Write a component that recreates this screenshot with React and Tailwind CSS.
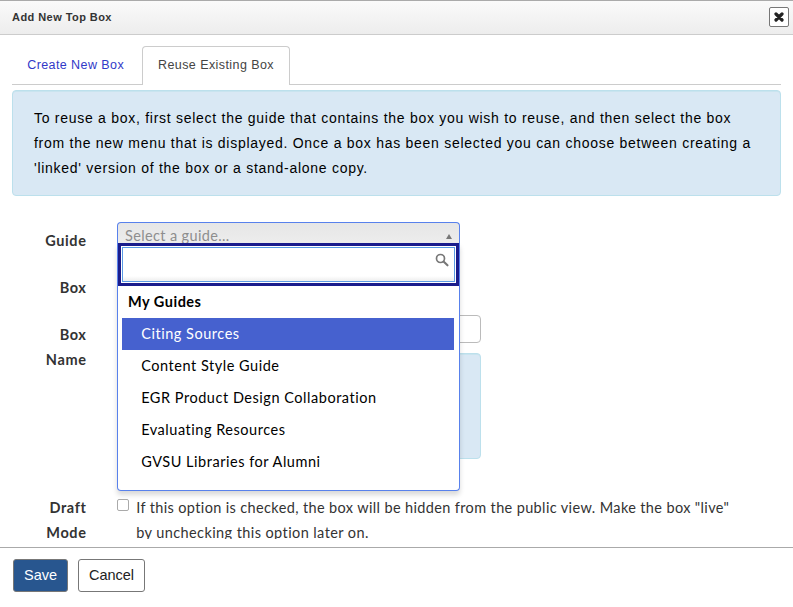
const guides = [
  "Citing Sources",
  "Content Style Guide",
  "EGR Product Design Collaboration",
  "Evaluating Resources",
  "GVSU Libraries for Alumni",
];

function Header() {
  return (
    <header className="flex h-[35px] shrink-0 items-start justify-between border-t border-b border-t-[#aaa] border-b-[#ccc] bg-gradient-to-b from-[#fafafa] to-[#ededed] pr-1 pl-3">
      <h1 className="pt-2 text-[11px] leading-4 font-bold tracking-[0.44px] text-[#333]">Add New Top Box</h1>
      <button className="mt-[6px] flex h-5 w-5 items-center justify-center rounded-[2px] border border-[#777] bg-white" aria-label="Close">
        <svg width="10" height="10" viewBox="0 0 10 10" stroke="#222" strokeWidth="3.2" strokeLinecap="round">
          <path d="M2 2l6 6M8 2l-6 6" />
        </svg>
      </button>
    </header>
  );
}

function Tabs() {
  return (
    <nav className="mx-3 mt-[11px] flex h-[39px] shrink-0 border-b border-[#ccc] text-[12.5px] leading-[38px] whitespace-nowrap">
      <a className="w-[130px] pl-[15.2px] tracking-[0.42px] text-[#3139c8]">Create New Box</a>
      <a className="-mb-px h-[39px] w-[148px] rounded-t-[4px] border border-b-0 border-[#ccc] bg-white pl-[15px] leading-[36px] tracking-[0.42px] text-[#444]">
        Reuse Existing Box
      </a>
    </nav>
  );
}

function GuideMenu() {
  return (
    <div className="absolute top-[21px] left-0 h-[248px] w-[343px] rounded-b-[4px] border border-t-0 border-[#5881ec] bg-white shadow-[0_4px_5px_rgba(0,0,0,0.15)]">
      <div className="h-[43px] border-[3px] border-[#1a1c8c] p-px">
        <div className="flex h-[35px] justify-end border border-[#5b9be4] bg-gradient-to-b from-white from-85% to-[#eee] pt-[5px] pr-[5px]">
          <svg width="14" height="14" viewBox="0 0 14 14" fill="none" stroke="#777" strokeLinecap="round">
            <circle cx="5.5" cy="5.5" r="4" strokeWidth="1.7" />
            <path d="M8.8 8.8l3.7 3.5" strokeWidth="2.1" />
          </svg>
        </div>
      </div>
      <div className="pr-[5px] pl-1 text-[14.5px] leading-8 tracking-[0.53px] text-black">
        <div className="pl-[6px] font-bold tracking-[0.5px]">My Guides</div>
        {guides.map((name, i) => (
          <div key={name} className={i === 0 ? "bg-[#4661cf] pl-[19.2px] text-white" : "pl-[19.2px]"}>
            {name}
          </div>
        ))}
      </div>
    </div>
  );
}

function Label({ children }) {
  return <div className="w-[86.5px] shrink-0 pt-[6px] pl-8 text-right font-bold tracking-[0.6px]">{children}</div>;
}

function Form() {
  return (
    <form className="mt-[26px] font-['Lato',sans-serif] text-[14.5px] leading-[25px] tracking-[0.365px] text-[#333]">
      <div className="flex h-[47px]">
        <Label>Guide</Label>
        <div className="relative z-10 ml-[30.5px] h-[25px] w-[343px]">
          <div className="flex h-[25px] items-start justify-between rounded-t-[4px] border border-b-0 border-[#5881ec] bg-gradient-to-b from-[#e6e6e6] to-[#eee] pr-[7px] pl-[7px] text-[#8e8e8e]">
            <span>Select a guide...</span>
            <svg className="mt-[11px]" width="6" height="5" viewBox="0 0 6 5" fill="#777">
              <path d="M3 0l3 5H0z" />
            </svg>
          </div>
          <GuideMenu />
        </div>
      </div>
      <div className="flex h-[47px]">
        <Label>Box</Label>
      </div>
      <div className="flex h-[179px]">
        <Label>
          Box
          <br />
          Name
        </Label>
        <div className="ml-[30.5px] w-[364px]">
          <div className="mt-[-1px] h-7 rounded-[4px] border border-[#bbb] bg-white" />
          <div className="mt-[10px] h-[106px] rounded-[4px] border border-[#bce0ec] bg-[#d9e8f4] shadow-[inset_0_1px_0_#c9e4ef]" />
        </div>
      </div>
      <div className="flex">
        <div className="w-[86.5px] shrink-0 pl-8 text-right font-bold tracking-[0.6px]">
          Draft
          <br />
          Mode
        </div>
        <div className="mt-[4px] ml-[30.5px] h-3 w-3 shrink-0 rounded-[2px] border border-[#aaa] bg-white" />
        <p className="ml-[7.2px] whitespace-nowrap">
          If this option is checked, the box will be hidden from the public view. Make the box "live"
          <br />
          <span className="tracking-[0.41px]">by unchecking this option later on.</span>
        </p>
      </div>
    </form>
  );
}

export default function App() {
  return (
    <div className="flex h-[607px] w-[793px] flex-col overflow-hidden bg-white font-['Liberation_Sans',Arial,sans-serif]">
      <Header />
      <main className="h-[504px] shrink-0 overflow-hidden">
        <div className="flow-root">
          <Tabs />
        </div>
        <div className="mx-3 mt-[5px] h-[106px] rounded-[4px] border border-[#bce0ec] bg-[#d9e8f4] pt-[15px] pl-[21px] text-[14px] leading-[25px] tracking-[0.725px] whitespace-nowrap text-black shadow-[inset_0_1px_0_#c9e4ef]">
          To reuse a box, first select the guide that contains the box you wish to reuse, and then select the box
          <br />
          from the new menu that is displayed. Once a box has been selected you can choose between creating a
          <br />
          'linked' version of the box or a stand-alone copy.
        </div>
        <Form />
      </main>
      <footer className="mt-2 flex grow gap-[10px] border-t border-[#aaa] pt-[11px] pl-[13px] text-[14.5px]">
        <button className="h-[33px] w-[55px] rounded-[3px] border border-[#777] bg-[#28568f] text-white">Save</button>
        <button className="h-[33px] w-[67px] rounded-[3px] border border-[#777] bg-white text-[#222]">Cancel</button>
      </footer>
    </div>
  );
}
